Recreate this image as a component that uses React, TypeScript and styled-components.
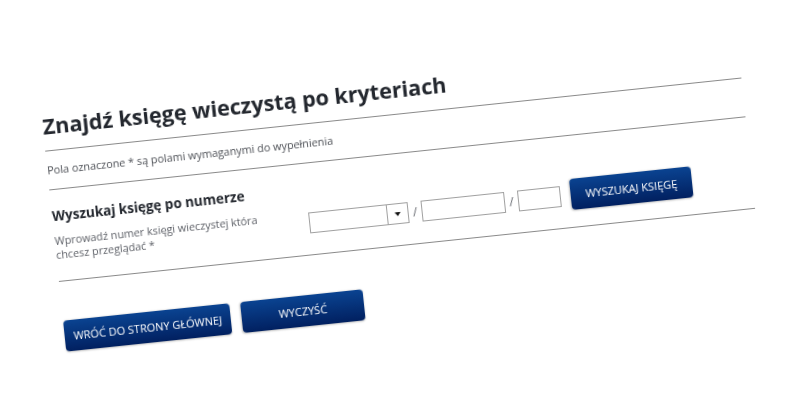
import { createGlobalStyle, styled } from "styled-components";

const GlobalStyle = createGlobalStyle`
    html, body {
        margin: 0;
        background: #ffffff;
        overflow: hidden;
    }
`;

const Stage = styled.div`
    width: 790px;
    height: 400px;
    padding: 92px 0 0 39px;
    box-sizing: border-box;
    overflow: hidden;
    background: #ffffff;
`;

// the whole form is photographed at an angle
const Sheet = styled.main`
    width: 700px;
    transform: rotate(-6deg);
    transform-origin: 0 0;
    font-family: "Open Sans", "Liberation Sans", sans-serif;
    filter: blur(0.35px);
`;

const TitleBlock = styled.div`
    height: 60px;
    box-sizing: border-box;
    display: flex;
    align-items: flex-end;
    padding-bottom: 8px;
    border-bottom: 1px solid #8a8a8a;
`;

const Title = styled.h1`
    margin: 0;
    font-size: 21.6px;
    line-height: 32px;
    font-weight: 700;
    color: #23272e;
`;

const Note = styled.p`
    margin: 0;
    height: 39px;
    box-sizing: border-box;
    padding-top: 11px;
    font-size: 10.85px;
    line-height: 16px;
    color: #4d5056;
    border-bottom: 1px solid #8a8a8a;
`;

const SearchRow = styled.section`
    height: 92px;
    box-sizing: border-box;
    display: flex;
    border-bottom: 1px solid #8a8a8a;
`;

const SearchLabel = styled.div`
    width: 255px;
    flex: none;
    padding-top: 16px;
`;

const Heading = styled.h2`
    margin: 0 0 8px;
    font-size: 13.5px;
    line-height: 20px;
    font-weight: 700;
    color: #23272e;
`;

const Hint = styled.p`
    margin: 0;
    width: 215px;
    font-size: 10.8px;
    line-height: 14px;
    color: #5c5f66;
`;

const Fields = styled.div`
    display: flex;
    align-items: flex-start;
    padding-top: 49px;
`;

const Slash = styled.span`
    width: 13px;
    text-align: center;
    font-size: 12px;
    line-height: 22px;
    color: #66696f;
`;

const SelectBox = styled.div`
    width: 100px;
    height: 21px;
    box-sizing: border-box;
    display: flex;
    justify-content: flex-end;
    border: 1px solid #a0a0a0;
    background: #ffffff;
`;

const SelectArrow = styled.div`
    width: 20px;
    display: flex;
    align-items: center;
    justify-content: center;
    border-left: 1px solid #a0a0a0;
`;

const Caret = styled.span`
    width: 0;
    height: 0;
    border-left: 3.5px solid transparent;
    border-right: 3.5px solid transparent;
    border-top: 4px solid #111111;
`;

const TextField = styled.input<{ $width: number }>`
    width: ${({ $width }) => $width}px;
    height: 21px;
    box-sizing: border-box;
    padding: 0;
    border: 1px solid #a0a0a0;
    border-radius: 0;
    background: #ffffff;
    outline: none;
`;

const Button = styled.button<{ $width: number }>`
    width: ${({ $width }) => $width}px;
    height: 31px;
    padding: 0;
    border: none;
    border-radius: 4px;
    background: linear-gradient(180deg, #0a4391 0%, #012060 100%);
    box-shadow: 0 1px 2px rgba(0, 0, 0, 0.25);
    color: #ffffff;
    font-family: inherit;
    font-size: 11px;
    font-weight: 400;
    text-transform: uppercase;
`;

const SearchButton = styled(Button)`
    margin: -6px 0 0 10px;
`;

const Actions = styled.div`
    display: flex;
    gap: 11px;
    padding-top: 39px;
`;

export default function App() {
    return (
        <Stage>
            <GlobalStyle />
            <Sheet>
                <TitleBlock>
                    <Title>Znajdź księgę wieczystą po kryteriach</Title>
                </TitleBlock>
                <Note>Pola oznaczone * są polami wymaganymi do wypełnienia</Note>
                <SearchRow>
                    <SearchLabel>
                        <Heading>Wyszukaj księgę po numerze</Heading>
                        <Hint>Wprowadź numer księgi wieczystej która chcesz przeglądać *</Hint>
                    </SearchLabel>
                    <Fields>
                        <SelectBox>
                            <SelectArrow>
                                <Caret />
                            </SelectArrow>
                        </SelectBox>
                        <Slash>/</Slash>
                        <TextField $width={84} />
                        <Slash>/</Slash>
                        <TextField $width={43} />
                        <SearchButton $width={122}>Wyszukaj księgę</SearchButton>
                    </Fields>
                </SearchRow>
                <Actions>
                    <Button $width={167}>Wróć do strony głównej</Button>
                    <Button $width={123}>Wyczyść</Button>
                </Actions>
            </Sheet>
        </Stage>
    );
}
